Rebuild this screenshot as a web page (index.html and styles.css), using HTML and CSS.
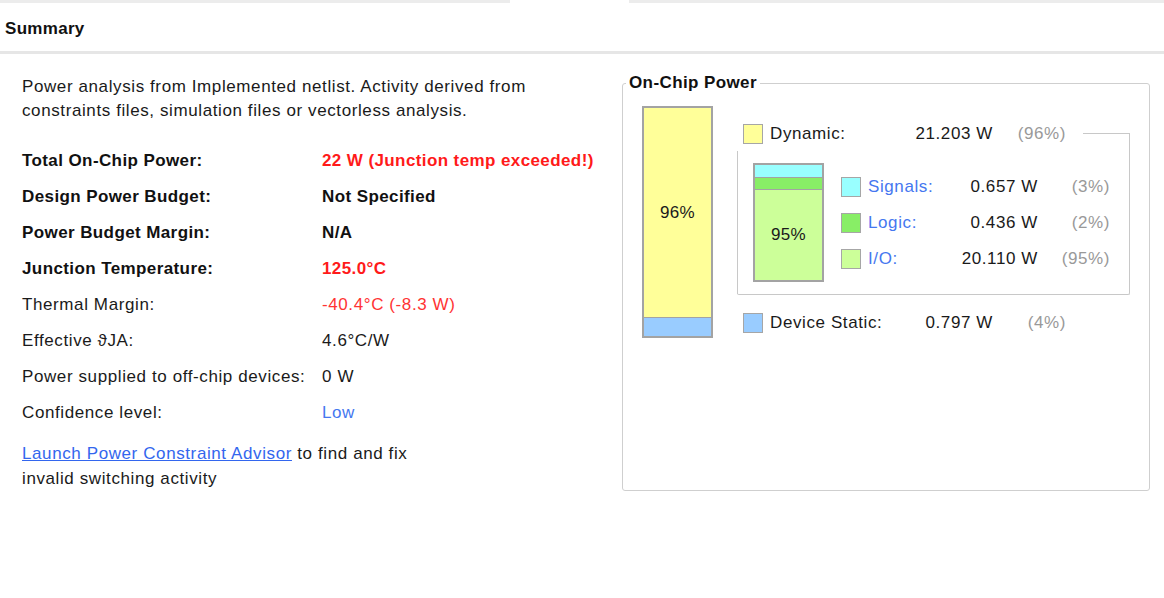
FILE: index.html
```html
<!DOCTYPE html>
<html>
<head>
<meta charset="utf-8">
<link rel="stylesheet" href="styles.css">
</head>
<body>
<div class="tabs"><div class="tab-a"></div><div class="tab-b"></div><div class="tab-c"></div></div>
<div class="header">Summary</div>
<div class="summary">
  <div class="left">
    <p class="intro">Power analysis from Implemented netlist. Activity derived from constraints files, simulation files or vectorless analysis.</p>
    <div class="kv">
      <div class="k b">Total On-Chip Power:</div><div class="v b red">22 W (Junction temp exceeded!)</div>
      <div class="k b">Design Power Budget:</div><div class="v b">Not Specified</div>
      <div class="k b">Power Budget Margin:</div><div class="v b">N/A</div>
      <div class="k b">Junction Temperature:</div><div class="v b red">125.0°C</div>
      <div class="k">Thermal Margin:</div><div class="v red-l">-40.4°C (-8.3 W)</div>
      <div class="k">Effective ϑJA:</div><div class="v">4.6°C/W</div>
      <div class="k">Power supplied to off-chip devices:</div><div class="v">0 W</div>
      <div class="k">Confidence level:</div><div class="v blue">Low</div>
    </div>
    <p class="advisor"><a class="link" href="#">Launch Power Constraint Advisor</a> to find and fix<br>invalid switching activity</p>
  </div>
  <fieldset class="chip">
    <legend class="chip-title">On-Chip Power</legend>
    <div class="chip-content">
      <div class="bigbar">
        <div class="seg seg-dyn">96%</div>
        <div class="seg seg-static"></div>
      </div>
      <div class="breakdown">
        <div class="dyn-head">
          <span class="sw sw-dyn"></span>
          <span class="lbl">Dynamic:</span>
          <span class="val">21.203 W</span>
          <span class="pct">(96%)</span>
          <span class="dyn-line"></span>
        </div>
        <div class="dyn-body">
          <div class="dyn-inner">
            <div class="smallbar">
              <div class="seg seg-sig"></div>
              <div class="seg seg-log"></div>
              <div class="seg seg-io">95%</div>
            </div>
            <div class="rows">
              <div class="row"><span class="sw sw-sig"></span><span class="rlbl">Signals:</span><span class="rval">0.657 W</span><span class="rpct">(3%)</span></div>
              <div class="row"><span class="sw sw-log"></span><span class="rlbl">Logic:</span><span class="rval">0.436 W</span><span class="rpct">(2%)</span></div>
              <div class="row"><span class="sw sw-io"></span><span class="rlbl">I/O:</span><span class="rval">20.110 W</span><span class="rpct">(95%)</span></div>
            </div>
          </div>
        </div>
        <div class="static-row">
          <span class="sw sw-static"></span>
          <span class="lbl">Device Static:</span>
          <span class="val">0.797 W</span>
          <span class="pct">(4%)</span>
        </div>
      </div>
    </div>
  </fieldset>
</div>
</body>
</html>
```
FILE: styles.css
```css
html, body {
  margin: 0;
  padding: 0;
  background: #ffffff;
}
body {
  font-family: "Liberation Sans", Arial, sans-serif;
  font-size: 17px;
  letter-spacing: 0.6px;
  color: #1a1a1a;
}
.tabs {
  display: flex;
  height: 3px;
}
.tab-a { width: 510px; background: #ececec; }
.tab-b { width: 119px; background: #ffffff; }
.tab-c { flex: 1; background: #ececec; }
.header {
  height: 48px;
  line-height: 51px;
  padding-left: 5px;
  font-weight: bold;
  letter-spacing: 0.3px;
  color: #111111;
  border-bottom: 3px solid #e6e6e6;
}
.summary {
  display: flex;
  align-items: flex-start;
  padding: 21px 15px 0 22px;
}
.left {
  width: 600px;
  flex: none;
}
.intro {
  margin: 0 0 20px 0;
  width: 560px;
  line-height: 24px;
}
.kv {
  display: grid;
  grid-template-columns: 300px auto;
  grid-auto-rows: 36px;
  align-items: center;
}
.b { font-weight: bold; letter-spacing: 0.4px; color: #111111; }
.b.red { color: #ff1a1a; }
.red-l { color: #ff3333; }
.blue { color: #4577f0; }
.advisor {
  margin: 10px 0 0 0;
  line-height: 25px;
}
.link {
  color: #3366ee;
  text-decoration: underline;
}
.chip {
  flex: none;
  width: 487px;
  margin: -2px 0 0 0;
  padding: 13px 19px 0 19px;
  border: 1px solid #cfcfcf;
  border-radius: 3px;
}
.chip-title {
  margin-left: -16px;
  padding: 0 3px;
  font-weight: bold;
  letter-spacing: 0.4px;
  line-height: 20px;
  color: #111111;
}
.chip-content {
  display: flex;
  align-items: flex-start;
  height: 384px;
}
.bigbar {
  width: 67px;
  height: 228px;
  border: 2px solid #a3a3a3;
  display: flex;
  flex-direction: column;
  flex: none;
}
.seg {
  display: flex;
  align-items: center;
  justify-content: center;
  letter-spacing: 0.3px;
}
.seg-dyn { flex: 1; background: #ffff99; }
.seg-static { height: 18px; background: #99ccff; border-top: 1px solid #a3a3a3; }
.breakdown {
  margin-left: 24px;
  width: 393px;
  flex: none;
}
.dyn-head, .static-row {
  display: flex;
  align-items: center;
  height: 21px;
  padding-left: 6px;
}
.dyn-head { margin-top: 17px; }
.static-row { margin-top: 17px; }
.sw {
  width: 18px;
  height: 18px;
  border: 1px solid #a6a6a6;
  flex: none;
}
.sw-dyn { background: #ffff99; }
.sw-static { background: #99ccff; }
.sw-sig { background: #99ffff; }
.sw-log { background: #88ee66; }
.sw-io { background: #ccff99; }
.lbl {
  margin-left: 7px;
  width: 145px;
}
.val {
  width: 78px;
  text-align: right;
  white-space: nowrap;
}
.pct {
  width: 73px;
  text-align: right;
  color: #999999;
}
.dyn-line {
  align-self: stretch;
  margin-top: 10px;
  margin-left: 17px;
  flex: 1;
  border-top: 1px solid #c8c8c8;
  border-right: 1px solid #c8c8c8;
}
.dyn-body {
  padding-top: 7px;
  border-right: 1px solid #c8c8c8;
  border-bottom: 1px solid #c8c8c8;
  border-bottom-right-radius: 2px;
  border-bottom-left-radius: 2px;
}
.dyn-inner {
  display: flex;
  align-items: center;
  border-left: 1px solid #c8c8c8;
  padding: 12px 0 12px 15px;
}
.smallbar {
  width: 67px;
  height: 115px;
  border: 2px solid #a3a3a3;
  display: flex;
  flex-direction: column;
  flex: none;
}
.seg-sig { height: 12px; background: #99ffff; border-bottom: 1px solid #a3a3a3; }
.seg-log { height: 11px; background: #88ee66; border-bottom: 1px solid #a3a3a3; }
.seg-io { flex: 1; background: #ccff99; }
.rows {
  margin-left: 17px;
  display: flex;
  flex-direction: column;
  gap: 16px;
}
.row {
  display: flex;
  align-items: center;
  height: 20px;
}
.rlbl {
  margin-left: 7px;
  width: 90px;
  color: #4577f0;
}
.rval {
  width: 80px;
  text-align: right;
  white-space: nowrap;
}
.rpct {
  width: 72px;
  text-align: right;
  color: #999999;
}
```
